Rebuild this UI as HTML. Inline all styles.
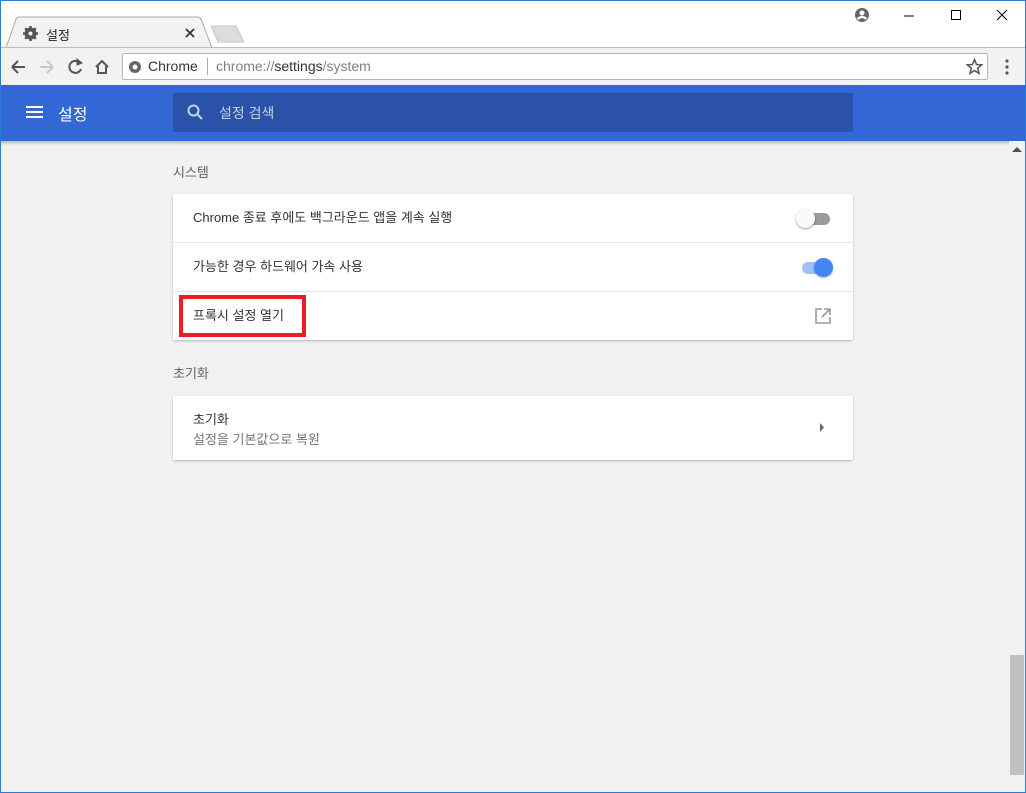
<!DOCTYPE html>
<html><head><meta charset="utf-8"><style>
*{margin:0;padding:0;box-sizing:border-box}
body{width:1026px;height:793px;overflow:hidden;background:#f1f1f1;font-family:"Liberation Sans","Noto Sans CJK KR",sans-serif;position:relative;font-size:13px;color:#333}
.abs{position:absolute}
.win{left:0;top:0;width:1026px;height:793px;border:1px solid #2b7bd8}
.card{background:#fff;box-shadow:0 1px 2px rgba(0,0,0,.25);border-radius:2px;left:173px;width:680px}
.row{height:49px;border-bottom:1px solid #e6e6e6;padding-left:20px;line-height:47px;font-size:13px;color:#333;position:relative}
</style></head><body>
<div class="abs" style="left:0;top:0;width:1026px;height:47px;background:#fff"></div>
<svg class="abs" style="left:0;top:14px" width="260" height="35">
<path d="M6 34 L16 5 Q17 3 20 3 L197 3 Q200 3 201 5 L212 34" fill="#f2f2f2" stroke="#a9a9a9"/>
<path d="M211 12 L236 12 L244 28 L218 28 Z" fill="#dcdcdc" stroke="#c8c8c8"/>
</svg>
<div class="abs" style="left:0;top:47px;width:1026px;height:38px;background:#f2f2f2;border-top:1px solid #bcbcbc"></div>
<svg class="abs" style="left:23px;top:26px" width="15" height="15"><circle cx="7.5" cy="7.5" r="4.5" fill="none" stroke="#555" stroke-width="3"/><path d="M7.5 0V15M0 7.5H15M2.2 2.2L12.8 12.8M12.8 2.2L2.2 12.8" stroke="#555" stroke-width="2.5"/><circle cx="7.5" cy="7.5" r="2" fill="#f2f2f2"/></svg>
<div class="abs" style="left:46px;top:25px;font-size:13px;color:#222">설정</div>
<svg class="abs" style="left:185px;top:28px" width="10" height="10"><path d="M1 1L9 9M9 1L1 9" stroke="#333" stroke-width="1.8"/></svg>
<svg class="abs" style="left:852px;top:6px" width="170" height="22">
<circle cx="10" cy="9" r="7" fill="#666"/><circle cx="10" cy="7" r="2.5" fill="#fff"/><path d="M5.5 13 Q10 9 14.5 13" stroke="#fff" stroke-width="2.2" fill="none"/>
<line x1="52" y1="10" x2="62" y2="10" stroke="#000"/>
<rect x="99.5" y="4.5" width="9" height="9" fill="none" stroke="#000"/>
<path d="M145 4 L155 14 M155 4 L145 14" stroke="#000"/>
</svg>
<svg class="abs" style="left:0;top:54px" width="120" height="26">
<path d="M12 13 H25 M12 13 L18 7 M12 13 L18 19" stroke="#555" stroke-width="2" fill="none"/>
<path d="M53 13 H40 M53 13 L47 7 M53 13 L47 19" stroke="#c8c8c8" stroke-width="2" fill="none"/>
<path d="M80 9 A6 6 0 1 0 81 15" stroke="#555" stroke-width="2" fill="none"/><path d="M77 5 L82 9 L77 11 Z" fill="#555" stroke="#555"/>
<path d="M96 13 L102 7 L108 13 M98 12 V19 H106 V12" stroke="#555" stroke-width="2" fill="none"/>
</svg>
<div class="abs" style="left:122px;top:53px;width:866px;height:27px;background:#fff;border:1px solid #b5b5b5;border-radius:2px"></div>
<svg class="abs" style="left:128px;top:60px" width="14" height="14"><circle cx="7" cy="7" r="6" fill="#666"/><circle cx="7" cy="7" r="2.5" fill="#fff"/></svg>
<div class="abs" style="left:148px;top:58px;font-size:14px;color:#333">Chrome</div>
<div class="abs" style="left:207px;top:58px;width:1px;height:17px;background:#aaa"></div>
<div class="abs" style="left:216px;top:58px;font-size:14px;color:#808080">chrome://<span style="color:#333">settings</span>/system</div>
<svg class="abs" style="left:966px;top:58px" width="17" height="17"><path d="M8.5 1.5L10.5 6.5L15.8 6.8L11.7 10.2L13 15.4L8.5 12.5L4 15.4L5.3 10.2L1.2 6.8L6.5 6.5Z" fill="none" stroke="#555" stroke-width="1.5"/></svg>
<svg class="abs" style="left:1004px;top:58px" width="6" height="20"><circle cx="3" cy="3" r="1.6" fill="#555"/><circle cx="3" cy="9" r="1.6" fill="#555"/><circle cx="3" cy="15" r="1.6" fill="#555"/></svg>
<div class="abs" style="left:0;top:85px;width:1026px;height:56px;background:#3367d6;box-shadow:0 2px 3px rgba(0,0,0,.25)"></div>
<svg class="abs" style="left:26px;top:105px" width="18" height="14"><path d="M0 2H17M0 7H17M0 12H17" stroke="#fff" stroke-width="2"/></svg>
<div class="abs" style="left:58px;top:101px;font-size:16px;color:#fff">설정</div>
<div class="abs" style="left:173px;top:93px;width:680px;height:39px;background:#2a52a8;border-radius:2px"></div>
<svg class="abs" style="left:187px;top:104px" width="18" height="18"><circle cx="6.5" cy="6.5" r="5" stroke="#c5d0ea" stroke-width="2" fill="none"/><path d="M10 10 L15 15" stroke="#c5d0ea" stroke-width="2"/></svg>
<div class="abs" style="left:219px;top:103px;font-size:14px;color:#c5d0ea">설정 검색</div>
<div class="abs" style="left:173px;top:162px;color:#616161">시스템</div>
<div class="abs card" style="top:194px;height:146px">
<div class="row">Chrome 종료 후에도 백그라운드 앱을 계속 실행
<div class="abs" style="left:627px;top:19px;width:30px;height:12px;border-radius:6px;background:#9b9b9b"></div>
<div class="abs" style="left:623px;top:15px;width:19px;height:19px;border-radius:50%;background:#fafafa;box-shadow:0 1px 2px rgba(0,0,0,.4)"></div></div>
<div class="row">가능한 경우 하드웨어 가속 사용
<div class="abs" style="left:629px;top:19px;width:30px;height:12px;border-radius:6px;background:#a1c0f7"></div>
<div class="abs" style="left:641px;top:15px;width:19px;height:19px;border-radius:50%;background:#4285f4;box-shadow:0 1px 2px rgba(0,0,0,.3)"></div></div>
<div class="row" style="border:none">프록시 설정 열기
<svg class="abs" style="left:642px;top:16px" width="16" height="16"><path d="M7 1H1V15H15V9" stroke="#999" stroke-width="1.6" fill="none"/><path d="M9 1H15V7M15 1L7 9" stroke="#999" stroke-width="1.6" fill="none"/></svg></div>
</div>
<div class="abs" style="left:179px;top:295px;width:127px;height:42px;border:4px solid #ec1c24"></div>
<div class="abs" style="left:173px;top:363px;color:#616161">초기화</div>
<div class="abs card" style="top:396px;height:64px">
<div class="abs" style="left:20px;top:13px;color:#333">초기화</div>
<div class="abs" style="left:20px;top:33px;color:#757575">설정을 기본값으로 복원</div>
<svg class="abs" style="left:646px;top:27px" width="6" height="10"><path d="M1 0L5 4.5L1 9Z" fill="#666"/></svg>
</div>
<div class="abs" style="left:1009px;top:141px;width:16px;height:650px;background:#f1f1f1"></div>
<svg class="abs" style="left:1012px;top:146px" width="10" height="6"><path d="M0 6L5 1L10 6Z" fill="#505050"/></svg>
<div class="abs" style="left:1010px;top:655px;width:14px;height:120px;background:#c1c1c1"></div>
<div class="abs win"></div>
</body></html>
